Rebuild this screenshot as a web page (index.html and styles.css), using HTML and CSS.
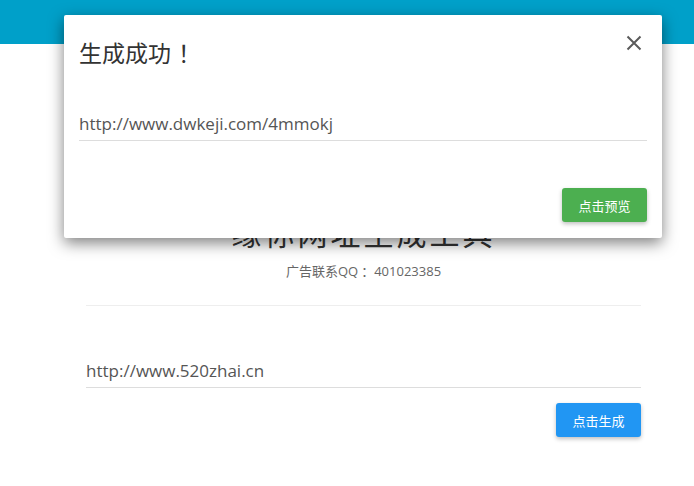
FILE: index.html
```html
<!DOCTYPE html>
<html lang="zh-CN">
<head>
<meta charset="utf-8">
<title>网址生成工具</title>
<link rel="stylesheet" href="styles.css">
</head>
<body>
<header class="topbar"></header>
<main class="container">
  <h1 class="page-title">缘你网址生成工具</h1>
  <p class="ad">广告联系QQ<span class="colon">：</span>401023385</p>
  <hr class="divider">
  <div class="field">
    <input class="line-input" type="text" value="http://www.520zhai.cn">
  </div>
  <div class="actions">
    <button class="btn btn-blue">点击生成</button>
  </div>
</main>

<div class="modal">
  <div class="modal-head">
    <h2 class="modal-title">生成成功<span class="bang">！</span></h2>
    <span class="close" aria-label="关闭">
      <svg width="16" height="16" viewBox="0 0 16 16"><path d="M1.5 1.5L14.5 14.5M14.5 1.5L1.5 14.5" stroke="#5a5a5a" stroke-width="2" fill="none"/></svg>
    </span>
  </div>
  <div class="modal-body">
    <input class="line-input" type="text" value="http://www.dwkeji.com/4mmokj">
  </div>
  <div class="modal-foot">
    <button class="btn btn-green">点击预览</button>
  </div>
</div>
</body>
</html>
```

FILE: styles.css
```css
* { box-sizing: border-box; }
html, body { margin: 0; padding: 0; }
body {
  background: #fff;
  font-family: "Open Sans", "Noto Sans CJK SC", sans-serif;
  color: #333;
  width: 694px;
  height: 486px;
  overflow: hidden;
  position: relative;
}
.topbar {
  height: 44px;
  background: #00a0c9;
}
.container {
  width: 555px;
  margin-left: 86px;
  padding-top: 168px;
}
.page-title {
  margin: 0;
  font-family: "Noto Sans CJK SC", sans-serif;
  font-weight: 400;
  font-size: 30px;
  letter-spacing: 3px;
  text-align: center;
  line-height: 40px;
  color: #333;
}
.ad {
  margin: 10px 0 0;
  text-align: center;
  font-size: 13px;
  line-height: 18px;
  color: #666;
}
.colon { padding-left: 3px; }
.divider {
  border: 0;
  border-top: 1px solid #eee;
  margin: 25px 0 0;
}
.field {
  margin-top: 48px;
}
.line-input {
  display: block;
  width: 100%;
  border: 0;
  border-bottom: 1px solid #ddd;
  outline: none;
  padding: 0;
  height: 34px;
  font-family: "Open Sans", "Noto Sans CJK SC", sans-serif;
  font-size: 17px;
  color: #555;
  background: transparent;
}
.actions {
  display: flex;
  justify-content: flex-end;
  margin-top: 15px;
}
.btn {
  border: 0;
  border-radius: 3px;
  height: 34px;
  width: 85px;
  font-family: "Noto Sans CJK SC", sans-serif;
  font-size: 13px;
  color: #fff;
  box-shadow: 0 2px 4px rgba(0,0,0,0.25);
  padding: 0;
}
.btn-blue { background: #2196f3; }
.btn-green { background: #4caf50; }

.modal {
  position: absolute;
  left: 64px;
  top: 15px;
  width: 598px;
  height: 223px;
  background: #fff;
  border-radius: 2px;
  box-shadow: 0 5px 15px rgba(0,0,0,0.5);
  padding: 0 15px;
  display: flex;
  flex-direction: column;
}
.modal-head {
  display: flex;
  justify-content: space-between;
  align-items: flex-start;
  padding-top: 20px;
}
.modal-title {
  margin: 0;
  font-family: "Noto Sans CJK SC", sans-serif;
  font-weight: 400;
  font-size: 23px;
  line-height: 34px;
  color: #333;
}
.bang { padding-left: 7px; }
.close {
  display: block;
  width: 16px;
  height: 16px;
  margin-top: 0;
  margin-right: 5px;
}
.close svg { display: block; }
.modal-body {
  margin-top: 38px;
}
.modal-foot {
  display: flex;
  justify-content: flex-end;
  margin-top: 47px;
}
```
